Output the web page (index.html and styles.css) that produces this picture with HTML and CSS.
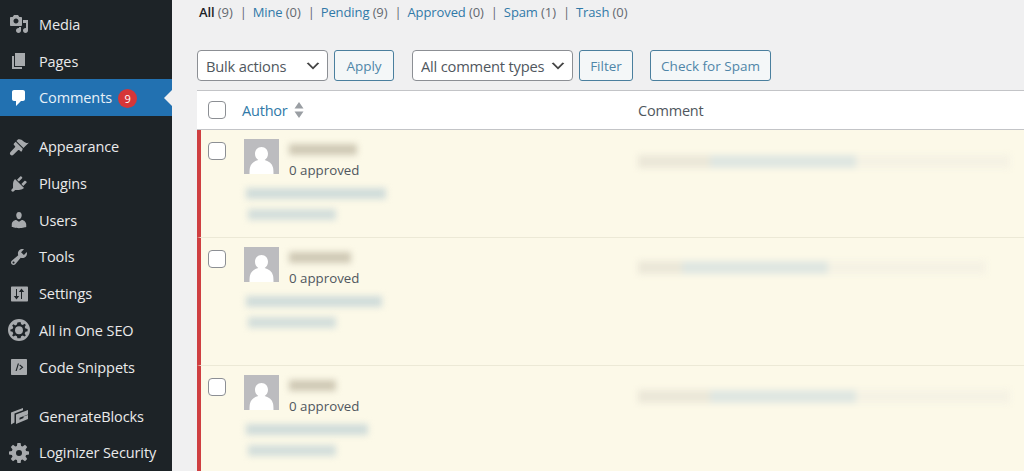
FILE: index.html
```html
<!DOCTYPE html>
<html lang="en">
<head>
<meta charset="utf-8">
<title>Comments</title>
<link rel="stylesheet" href="styles.css">
</head>
<body>
<div class="shell">
  <nav class="sidebar">
    <a class="item"><svg class="ico" viewBox="0 0 20 20"><path d="M13 11V4c0-.55-.45-1-1-1h-1.67L9 1H5L3.67 3H2c-.55 0-1 .45-1 1v7c0 .55.45 1 1 1h10c.55 0 1-.45 1-1zM7 4.5c1.38 0 2.5 1.12 2.5 2.5S8.38 9.5 7 9.5 4.5 8.38 4.5 7 5.62 4.5 7 4.5zM14 6h5v10.5c0 1.38-1.12 2.5-2.5 2.5S14 17.88 14 16.5s1.12-2.5 2.5-2.5c.17 0 .34.02.5.05V9h-3V6zm-4 8.05V13h2v3.5c0 1.38-1.12 2.5-2.5 2.5S7 17.88 7 16.5 8.12 14 9.5 14c.17 0 .34.02.5.05z"/></svg>Media</a>
    <a class="item"><svg class="ico" viewBox="0 0 20 20"><path d="M6 15V2h10v13H6zm-1 1h8v2H3V5h2v11z"/></svg>Pages</a>
    <a class="item active"><svg class="ico" viewBox="0 0 20 20"><path d="M5 2h9c1.1 0 2 .9 2 2v7c0 1.1-.9 2-2 2h-2l-5 5v-5H5c-1.1 0-2-.9-2-2V4c0-1.1.9-2 2-2z"/></svg>Comments<span class="badge">9</span></a>
    <a class="item gap"><svg class="ico" viewBox="0 0 20 20"><path d="M14.48 11.06L7.41 3.99l1.5-1.5c.5-.56 2.3-.47 3.51.32 1.21.8 1.43 1.28 2.91 2.1 1.18.64 2.45 1.26 4.45.85zm-.71.71L6.7 4.7 4.93 6.47c-.39.39-.39 1.02 0 1.41l1.06 1.06c.39.39.39 1.03 0 1.42L1.500 14.900c-.8.8-.8 2.100 0 2.900s2.100.8 2.900 0l4.600-4.600c.39-.39 1.020-.39 1.410 0l1.060 1.060c.39.39 1.020.39 1.410 0z"/></svg>Appearance</a>
    <a class="item"><svg class="ico" viewBox="0 0 20 20"><path d="M13.11 4.36L9.87 7.6 8 5.73l3.24-3.24c.35-.34 1.05-.2 1.56.32.52.51.66 1.21.31 1.55zm-8 1.77l.91-1.12 9.01 9.01-1.19.84c-.71.71-2.63 1.16-3.82 1.16H6.14L4.9 17.26c-.59.59-1.54.59-2.12 0-.59-.58-.59-1.53 0-2.12l1.24-1.24v-3.88c0-1.13.4-3.19 1.09-3.89zm7.26 3.97l3.24-3.24c.34-.35 1.04-.21 1.55.31.52.51.66 1.21.31 1.55l-3.24 3.25z"/></svg>Plugins</a>
    <a class="item"><svg class="ico" viewBox="0 0 20 20"><path d="M10 9.25c-2.27 0-2.73-3.44-2.73-3.44C7 4.02 7.82 2 9.97 2c2.16 0 2.98 2.02 2.71 3.81 0 0-.41 3.44-2.68 3.44zm0 2.57L12.72 10c2.39 0 4.52 2.33 4.52 4.53v2.49s-3.65 1.13-7.24 1.13c-3.65 0-7.24-1.13-7.24-1.13v-2.49c0-2.25 1.94-4.48 4.47-4.48z"/></svg>Users</a>
    <a class="item"><svg class="ico" viewBox="0 0 20 20"><path d="M16.68 9.77c-1.34 1.34-3.3 1.67-4.95.99l-5.41 6.52c-.99.99-2.59.99-3.58 0s-.99-2.59 0-3.57l6.52-5.42c-.68-1.65-.35-3.61.99-4.95 1.28-1.28 3.12-1.62 4.72-1.06l-2.89 2.89 2.82 2.82 2.86-2.87c.53 1.58.18 3.39-1.08 4.65zM3.81 16.21c.4.39 1.04.39 1.43 0 .4-.4.4-1.04 0-1.43-.39-.4-1.03-.4-1.43 0-.39.39-.39 1.03 0 1.43z"/></svg>Tools</a>
    <a class="item"><svg class="ico" viewBox="0 0 20 20"><path fill-rule="evenodd" d="M3 2.500h15c.55 0 1 .45 1 1v13c0 .55-.45 1-1 1H3c-.55 0-1-.45-1-1v-13c0-.55.45-1 1-1zM7 5v7H4.800L7.500 15.500 10.200 12H8V5zM13 15V8h2.200L12.500 4.500 9.800 8H12v7z"/></svg>Settings</a>
    <a class="item"><svg class="ico ico-lg" viewBox="0 0 20 20"><path fill-rule="evenodd" d="M10 0a10 10 0 1 1 0 20 10 10 0 0 1 0-20zM8.600 3.200l-.5 1.900-1.500.7-1.700-1-1.100 1.100 1 1.700-.7 1.500-1.900.5v1.600l1.900.5.7 1.500-1 1.700 1.100 1.100 1.700-1 1.500.7.5 1.900h2.800l.5-1.900 1.500-.7 1.700 1 1.100-1.100-1-1.700.7-1.500 1.900-.5V9.200l-1.900-.5-.7-1.500 1-1.700-1.100-1.100-1.700 1-1.500-.7-.5-1.900z"/><circle cx="10" cy="10.200" r="3.600"/></svg>All in One SEO</a>
    <a class="item"><svg class="ico" viewBox="0 0 20 20"><path fill-rule="evenodd" d="M3 2h14c.6 0 1 .4 1 1v14c0 .6-.4 1-1 1H3c-.6 0-1-.4-1-1V3c0-.6.4-1 1-1zm5.800 4.500L6.500 14h1.200l2.300-7.500zM11 7.500l-.7.9 2.400 1.900-2.400 1.900.7.9 3.400-2.800z"/></svg>Code Snippets</a>
    <a class="item gap"><svg class="ico" viewBox="0 0 20 20"><path d="M2 6.500 14 2v2.200L5.500 7.500v9L2 18.500zM7 8.500 19 4v4.500L10.500 11.700v2L14.500 12v-1.400L19 8.900V13L7 18z"/></svg>GenerateBlocks</a>
    <a class="item"><svg class="ico" viewBox="0 0 20 20"><path fill-rule="evenodd" d="M8.400 0h3.200l.5 2.900 1.500.6 2.400-1.700 2.200 2.200-1.700 2.400.6 1.500 2.900.5v3.200l-2.900.5-.6 1.500 1.700 2.400-2.200 2.200-2.400-1.700-1.500.6-.5 2.900H8.400l-.5-2.900-1.500-.6L4 18.200 1.800 16l1.700-2.400-.6-1.500L0 11.600V8.400l2.900-.5.6-1.500L1.800 4 4 1.800l2.400 1.700 1.500-.6zM10 7a3 3 0 1 0 0 6 3 3 0 0 0 0-6z"/></svg>Loginizer Security</a>
  </nav>
  <main class="content">
    <ul class="filters">
      <li class="current">All <span class="count">(9)</span></li>
      <li><a>Mine</a> <span class="count">(0)</span></li>
      <li><a>Pending</a> <span class="count">(9)</span></li>
      <li><a>Approved</a> <span class="count">(0)</span></li>
      <li><a>Spam</a> <span class="count">(1)</span></li>
      <li><a>Trash</a> <span class="count">(0)</span></li>
    </ul>
    <div class="toolbar">
      <select class="select bulk"><option>Bulk actions</option></select>
      <button class="btn apply">Apply</button>
      <select class="select types"><option>All comment types</option></select>
      <button class="btn filter">Filter</button>
      <button class="btn spam">Check for Spam</button>
    </div>
    <section class="table">
      <header class="thead">
        <input class="check" type="checkbox">
        <div class="th-author"><a>Author</a>
          <svg class="sort" viewBox="0 0 10 16"><path d="M5 0l4.500 6.500H.5zM5 16l4.500-6.500H.5z"/></svg>
        </div>
        <div class="th-comment">Comment</div>
      </header>

      <article class="row r1">
        <input class="check" type="checkbox">
        <div class="author">
          <div class="who">
            <svg class="avatar" viewBox="0 0 35 35"><rect width="35" height="35" fill="#bcbcbf"/><path d="M17.500 8c4 0 6.500 3 6.500 6.800 0 2.800-1.300 5-3.300 6.200 4.500 1.200 7.300 3.600 8.300 7.500 .4 1.500 .5 3.500 .5 6.500H5.500c0-3 .1-5 .5-6.500 1-3.900 3.800-6.300 8.300-7.500-2-1.200-3.300-3.400-3.300-6.200C11 11 13.500 8 17.500 8z" fill="#fff"/></svg>
            <div class="who-text"><div class="blur name n1"></div><div class="approved">0 approved</div></div>
          </div>
          <div class="blur mail m1"></div>
          <div class="blur ip"></div>
        </div>
        <div class="comment"><div class="blur line"><span class="seg a a1"></span><span class="seg b"></span><span class="seg c c1"></span></div></div>
      </article>

      <article class="row r2">
        <input class="check" type="checkbox">
        <div class="author">
          <div class="who">
            <svg class="avatar" viewBox="0 0 35 35"><rect width="35" height="35" fill="#bcbcbf"/><path d="M17.500 8c4 0 6.500 3 6.500 6.800 0 2.800-1.300 5-3.300 6.200 4.500 1.200 7.300 3.600 8.300 7.500 .4 1.500 .5 3.500 .5 6.500H5.500c0-3 .1-5 .5-6.500 1-3.900 3.800-6.300 8.300-7.500-2-1.200-3.300-3.400-3.300-6.200C11 11 13.500 8 17.500 8z" fill="#fff"/></svg>
            <div class="who-text"><div class="blur name n2"></div><div class="approved">0 approved</div></div>
          </div>
          <div class="blur mail m2"></div>
          <div class="blur ip"></div>
        </div>
        <div class="comment"><div class="blur line"><span class="seg a a2"></span><span class="seg b"></span><span class="seg c c2"></span></div></div>
      </article>

      <article class="row r3">
        <input class="check" type="checkbox">
        <div class="author">
          <div class="who">
            <svg class="avatar" viewBox="0 0 35 35"><rect width="35" height="35" fill="#bcbcbf"/><path d="M17.500 8c4 0 6.500 3 6.500 6.800 0 2.800-1.300 5-3.300 6.200 4.500 1.200 7.300 3.600 8.300 7.500 .4 1.500 .5 3.500 .5 6.500H5.500c0-3 .1-5 .5-6.500 1-3.900 3.800-6.300 8.300-7.500-2-1.200-3.300-3.400-3.300-6.200C11 11 13.500 8 17.500 8z" fill="#fff"/></svg>
            <div class="who-text"><div class="blur name n3"></div><div class="approved">0 approved</div></div>
          </div>
          <div class="blur mail m3"></div>
          <div class="blur ip"></div>
        </div>
        <div class="comment"><div class="blur line"><span class="seg a a1"></span><span class="seg b"></span><span class="seg c c1"></span></div></div>
      </article>
    </section>
  </main>
</div>
</body>
</html>
```
FILE: styles.css
```css
* { box-sizing: border-box; }
html, body { margin: 0; height: 100%; overflow: hidden; }
body { font-family: "Open Sans", "Liberation Sans", sans-serif; font-size: 14px; color: #50575e; background: #f0f0f1; }
.shell { display: flex; height: 471px; overflow: hidden; }

.sidebar { width: 172px; flex: none; background: #1d2327; padding-top: 6px; display: flex; flex-direction: column; }
.item { position: relative; display: flex; align-items: center; height: 36.7px; flex: none; padding-left: 9px; color: #eaeaeb; font-size: 14.500px; letter-spacing: -.1px; }
.ico { width: 20px; height: 20px; margin-right: 10px; fill: #a7aaad; flex: none; }
.ico-lg { width: 22px; height: 22px; margin-left: -1px; margin-right: 9px; }
.item.active { background: #2271b1; color: #e6f0f7; }
.item.active .ico { fill: #fff; }
.item.active::after { content: ""; position: absolute; right: 0; top: 50%; margin-top: -8px; border: 8px solid transparent; border-right-color: #f0f0f1; border-left-width: 0; }
.item.gap { margin-top: 12.500px; }
.badge { width: 19px; height: 19px; border-radius: 50%; margin-left: 6px; background: #d63638; color: #fff; font-size: 11px; letter-spacing: 0; display: flex; align-items: center; justify-content: center; margin-top: 2px; }

.content { flex: 1; min-width: 0; padding-left: 25px; }
.filters { list-style: none; margin: 0; padding: 0 0 0 2px; height: 24px; display: flex; font-size: 13px; line-height: 24px; letter-spacing: -.1px; }
.filters li + li::before { content: "|"; color: #646970; margin: 0 6px 0 7px; }
.filters a { color: #3079a8; }
.count { color: #646970; }
.current { color: #1d2327; font-weight: 600; }
.current .count { font-weight: 400; color: #646970; }

.toolbar { display: flex; align-items: center; height: 31px; margin-top: 26px; }
.select { appearance: none; height: 31px; border: 1px solid #8c8f94; border-radius: 4px; padding: 1px 24px 0 8px; font: inherit; font-size: 14.700px; letter-spacing: -.2px; color: #50575e; background: #fff url("data:image/svg+xml,%3Csvg xmlns='http://www.w3.org/2000/svg' width='20' height='20' viewBox='0 0 20 20'%3E%3Cpath d='M5 6l5 5 5-5 2 1-7 7-7-7z' fill='%23444'/%3E%3C/svg%3E") no-repeat right 5px top 6px / 18px 18px; }
.bulk { width: 131px; }
.types { width: 161px; margin-left: 18px; }
.btn { height: 31px; border: 1px solid #4a7f9e; border-radius: 3px; background: #f4f7f8; color: #4f86a8; font: inherit; font-size: 13.500px; padding: 0; }
.apply { width: 60px; margin-left: 6px; }
.filter { width: 54px; margin-left: 6px; }
.spam { width: 121px; margin-left: 17px; }

.table { margin-top: 9px; background: #fff; border-top: 1px solid #c3c4c7; }
.check { appearance: none; margin: 0; width: 18px; height: 18px; flex: none; background: #fff; border: 1px solid #8c8f94; border-radius: 4px; }
.thead { height: 39px; display: flex; align-items: center; padding-left: 11px; border-bottom: 1px solid #c3c4c7; }
.th-author { width: 396px; margin-left: 16px; display: flex; align-items: center; font-size: 14.500px; letter-spacing: -.2px; }
.th-author a { color: #3079a8; }
.sort { width: 10px; height: 16px; margin-left: 6px; fill: #9a9ea3; }
.th-comment { font-size: 14.500px; letter-spacing: -.2px; color: #50575e; }

.row { display: flex; align-items: flex-start; background: #fcf9e8; border-left: 4px solid #cf3f41; padding-left: 7px; border-bottom: 1px solid #ece9d6; }
.r1 { height: 108px; padding-top: 12px; }
.r2 { height: 128px; padding-top: 12px; }
.r3 { height: 128px; padding-top: 12px; }
.author { width: 394px; margin-left: 18px; margin-top: -3px; }
.who { display: flex; align-items: flex-start; }
.avatar { width: 35px; height: 35px; flex: none; display: block; }
.who-text { margin-left: 10px; padding-top: 5px; }
.approved { font-size: 13.300px; line-height: 18px; margin-top: 6px; color: #50575e; }
.blur { filter: blur(3px); }
.name { height: 11px; background: #cfc9b5; }
.n1 { width: 68px; }
.n2 { width: 62px; }
.n3 { width: 47px; }
.mail { height: 11px; margin: 9px 0 0 2px; background: #d0dcda; }
.m1 { width: 140px; }
.m2 { width: 136px; }
.m3 { width: 122px; }
.ip { width: 88px; height: 11px; margin: 10px 0 0 4px; background: #d3dedb; }
.comment { padding-top: 13px; }
.r2 .comment { padding-top: 11px; }
.r3 .comment { padding-top: 12px; }
.line { display: flex; height: 13px; width: 372px; }
.seg { display: block; height: 100%; }
.a { background: #ebe7d8; }
.a1 { width: 72px; }
.a2 { width: 44px; }
.b { width: 146px; background: #dfe6e1; }
.c { background: #f5f2e4; }
.c1 { width: 154px; }
.c2 { width: 158px; }
```
